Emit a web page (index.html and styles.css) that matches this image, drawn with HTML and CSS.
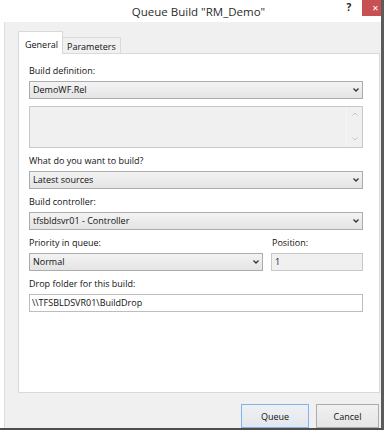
FILE: index.html
```html
<!DOCTYPE html>
<html lang="en">
<head>
    <meta charset="UTF-8">
    <title>Queue Build</title>
    <link rel="stylesheet" href="styles.css">
</head>
<body>
<div class="window">
    <div class="titlebar">
        <div class="title">Queue Build "RM_Demo"</div>
        <div class="help">?</div>
        <div class="close">&#x2715;</div>
    </div>

    <div class="client">
        <div class="tabs">
            <div class="tab tab-active">General</div>
            <div class="tab">Parameters</div>
        </div>

        <div class="panel">
            <span class="label first">Build definition:</span>
            <div class="combo">
                <span class="combo-text">DemoWF.Rel</span>
                <svg class="chevron" width="6" height="4" viewBox="0 0 6 4"><polyline points="0.5,0.5 3,3 5.5,0.5" fill="none" stroke="#333" stroke-width="1.3"/></svg>
            </div>
            <div class="desc">
                <div class="scroll">
                    <svg width="6" height="4" viewBox="0 0 6 4"><polyline points="0.5,3.5 3,1 5.5,3.5" fill="none" stroke="#c4c4c4" stroke-width="1"/></svg>
                    <svg width="6" height="4" viewBox="0 0 6 4"><polyline points="0.5,0.5 3,3 5.5,0.5" fill="none" stroke="#c4c4c4" stroke-width="1"/></svg>
                </div>
            </div>

            <span class="label">What do you want to build?</span>
            <div class="combo">
                <span class="combo-text">Latest sources</span>
                <svg class="chevron" width="6" height="4" viewBox="0 0 6 4"><polyline points="0.5,0.5 3,3 5.5,0.5" fill="none" stroke="#333" stroke-width="1.3"/></svg>
            </div>

            <span class="label">Build controller:</span>
            <div class="combo">
                <span class="combo-text">tfsbldsvr01 - Controller</span>
                <svg class="chevron" width="6" height="4" viewBox="0 0 6 4"><polyline points="0.5,0.5 3,3 5.5,0.5" fill="none" stroke="#333" stroke-width="1.3"/></svg>
            </div>

            <div class="row">
                <div class="col-main">
                    <span class="label">Priority in queue:</span>
                    <div class="combo">
                        <span class="combo-text">Normal</span>
                        <svg class="chevron" width="6" height="4" viewBox="0 0 6 4"><polyline points="0.5,0.5 3,3 5.5,0.5" fill="none" stroke="#333" stroke-width="1.3"/></svg>
                    </div>
                </div>
                <div class="col-pos">
                    <span class="label">Position:</span>
                    <div class="textbox textbox-readonly">1</div>
                </div>
            </div>

            <span class="label">Drop folder for this build:</span>
            <div class="textbox">\\TFSBLDSVR01\BuildDrop</div>
        </div>

        <div class="buttons">
            <div class="btn btn-default">Queue</div>
            <div class="btn">Cancel</div>
        </div>
    </div>
</div>
</body>
</html>
```

FILE: styles.css
```css
* {
    box-sizing: border-box;
}

body {
    margin: 0;
    background-color: #ffffff;
    font-family: "Open Sans", "Noto Sans", sans-serif;
    font-size: 9px;
    color: #111111;
}

/* Окно */
.window {
    width: 384px;
    height: 430px;
    background-color: #ffffff;
    border-right: 3px solid #5b5b5b;
    border-bottom: 2px solid #4d4d4d;
    display: flex;
    flex-direction: column;
}

.titlebar {
    height: 22px;
    display: flex;
    align-items: flex-start;
}

.title {
    flex: 1;
    padding-left: 55px;
    padding-top: 1px;
    text-align: center;
    font-size: 11.5px;
    line-height: 22px;
    color: #2b2b2b;
}

.help {
    width: 14px;
    margin-right: 6px;
    margin-top: 1px;
    text-align: center;
    font-weight: bold;
    font-size: 10px;
    line-height: 12px;
    color: #222222;
}

.close {
    width: 19px;
    height: 16px;
    padding-left: 10px;
    overflow: hidden;
    background-color: #c75050;
    color: #ffffff;
    font-size: 8px;
    line-height: 16px;
    white-space: nowrap;
}

.client {
    flex: 1;
    margin-left: 4px;
    background-color: #f0f0f0;
    border-left: 1px solid #dcdcdc;
    padding: 9px 0 0 13px;
}

/* Вкладки */
.tabs {
    display: flex;
    align-items: flex-end;
    height: 22px;
}

.tab {
    height: 16px;
    padding: 3px 4px 0 4px;
    line-height: 12px;
    border: 1px solid #d9d9d9;
    border-bottom: none;
    background-color: #f0f0f0;
    margin-left: -1px;
}

.tab-active {
    position: relative;
    z-index: 1;
    width: 45px;
    height: 23px;
    margin-left: 0;
    margin-bottom: -1px;
    padding: 7px 6px 0 6px;
    background-color: #ffffff;
}

.panel {
    width: 362px;
    height: 340px;
    background-color: #ffffff;
    border: 1px solid #d9d9d9;
    padding: 11px 0 0 10px;
}

.label {
    display: block;
    line-height: 12px;
    margin-top: 7px;
    margin-bottom: 4px;
}

.label.first {
    margin-top: 0;
}

.combo {
    width: 334px;
    height: 18px;
    display: flex;
    align-items: center;
    padding: 0 3px 0 3px;
    border: 1px solid #acacac;
    background: linear-gradient(#f3f3f3, #e4e4e4);
}

.combo-text {
    flex: 1;
    line-height: 12px;
}

.chevron {
    display: block;
}

.desc {
    width: 334px;
    height: 42px;
    margin-top: 7px;
    display: flex;
    justify-content: flex-end;
    border: 1px solid #c8c8c8;
    background-color: #f0f0f0;
}

.scroll {
    width: 16px;
    display: flex;
    flex-direction: column;
    justify-content: space-between;
    align-items: center;
    padding: 5px 0 6px 0;
    border-left: 1px solid #f6f6f6;
}

.scroll svg {
    display: block;
}

.row {
    display: flex;
    gap: 8px;
}

.col-main .combo {
    width: 234px;
}

.col-pos {
    width: 92px;
}

.col-pos .label {
    padding-left: 1px;
}

.textbox {
    width: 334px;
    height: 18px;
    padding-left: 2px;
    line-height: 16px;
    border: 1px solid #bdbdbd;
    background-color: #ffffff;
}

.col-pos .textbox {
    width: 92px;
}

.textbox-readonly {
    padding-left: 3px;
    background-color: #f0f0f0;
    border-color: #c8c8c8;
}

/* Кнопки */
.buttons {
    display: flex;
    justify-content: flex-end;
    gap: 7px;
    margin-top: 11px;
    padding-right: 2px;
}

.btn {
    width: 63px;
    height: 24px;
    display: flex;
    align-items: center;
    justify-content: center;
    border: 1px solid #acacac;
    background: linear-gradient(#f0f0f0, #e5e5e5);
}

.btn-default {
    width: 68px;
    border-color: #7eb4ea;
    background: linear-gradient(#eef1f4, #e3e7eb);
}
```
